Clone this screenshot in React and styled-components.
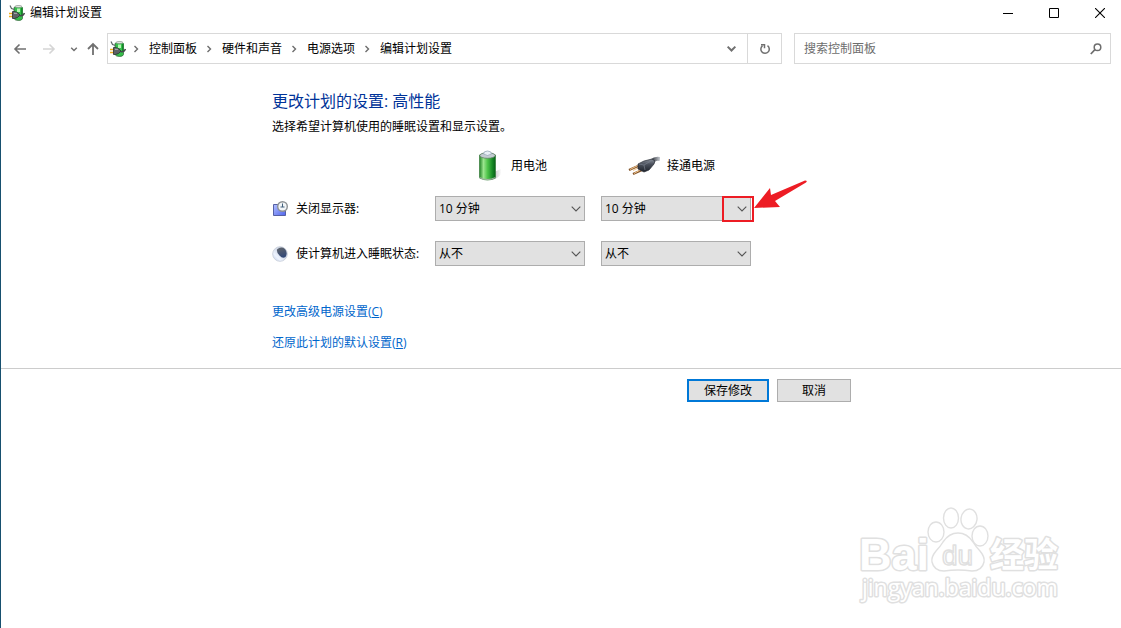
import React, { memo } from 'react'
import styled, { createGlobalStyle } from 'styled-components'

const GlobalStyle = createGlobalStyle`
  * {
    box-sizing: border-box;
  }

  body {
    margin: 0;
    background: #fff;
  }

  body, button, input, select {
    font-family: "Open Sans", "Noto Sans CJK SC", sans-serif;
    font-size: 12px;
    line-height: 16px;
    color: #000;
  }

  button {
    padding: 0;
    border: none;
    background: transparent;
  }

  svg {
    display: block;
    flex-shrink: 0;
  }
`

const WindowWrapper = styled.div`
  position: relative;
  min-height: 100vh;
  border-left: 1px solid #17506f;
`

const TitleBar = styled.header`
  display: flex;
  align-items: center;
  justify-content: space-between;
  height: 25px;
  padding-left: 8px;

  .window-title {
    display: flex;
    align-items: center;
    gap: 5px;
  }

  .window-controls {
    display: flex;
    gap: 4px;
  }
`

const ControlButton = styled.button`
  display: flex;
  align-items: center;
  justify-content: center;
  width: 42px;
  height: 24px;
`

const NavBar = styled.nav`
  display: flex;
  align-items: center;
  padding: 8px 10px 0 10px;
`

const NavButton = styled.button`
  display: flex;
  align-items: center;
  justify-content: center;
  width: ${props => props.$width}px;
  height: 30px;
  color: ${props => (props.disabled ? '#d5d5d5' : '#707070')};
`

const AddressBar = styled.div`
  display: flex;
  flex: 1;
  align-items: center;
  height: 31px;
  padding-left: 2px;
  border: 1px solid #d9d9d9;

  .crumbs {
    display: flex;
    flex: 1;
    align-items: center;
    margin: 0;
    padding: 0;
    list-style: none;
  }

  .crumbs li {
    display: flex;
    align-items: center;
    white-space: nowrap;
  }

  .crumbs li + li {
    padding-left: 2px;
  }

  .crumbs svg {
    margin: 0 9px 0 6px;
  }

  .crumbs a {
    color: #000;
    text-decoration: none;
  }

  .refresh {
    height: 29px;
    border-left: 1px solid #d9d9d9;
  }
`

const SearchBox = styled.label`
  display: flex;
  align-items: center;
  width: 317px;
  height: 31px;
  margin-left: 12px;
  padding: 0 8px 0 9px;
  border: 1px solid #d9d9d9;

  input {
    flex: 1;
    min-width: 0;
    padding: 0;
    border: none;
    outline: none;
  }

  input::placeholder {
    color: #6d6d6d;
    opacity: 1;
  }
`

const Content = styled.main`
  max-width: 578px;
  margin: 0 auto;
  padding-top: 25px;

  h1 {
    margin: 0;
    font-size: 16px;
    font-weight: normal;
    line-height: 24px;
    color: #003399;
  }

  p {
    margin: 6px 0 0;
  }
`

const PlanGrid = styled.div`
  display: grid;
  grid-template-columns: 147px 150px 150px;
  column-gap: 16px;
  align-items: center;
  margin-top: 15px;
`

const SourceHeader = styled.div`
  display: flex;
  align-items: center;
  gap: 7px;
  height: 32px;
  margin-bottom: 4px;
  padding-left: ${props => props.$indent}px;
`

const SettingLabel = styled.label`
  display: flex;
  align-items: center;
  gap: 8px;
  height: 45px;
  white-space: nowrap;
`

const SelectWrapper = styled.div`
  position: relative;

  select {
    display: block;
    width: 100%;
    height: 25px;
    padding: 0 24px 0 3px;
    border: 1px solid #adadad;
    border-radius: 0;
    background: #e1e1e1;
    appearance: none;
  }

  .select-arrow {
    position: absolute;
    top: 9px;
    right: 4px;
    pointer-events: none;
  }
`

const HighlightBox = styled.div`
  position: absolute;
  top: 0;
  right: -3px;
  width: 32px;
  height: 26px;
  border: 2px solid #ed1c24;
  pointer-events: none;
`

const PointerArrow = styled.svg`
  position: absolute;
  left: 153px;
  bottom: 7px;
  pointer-events: none;
`

const LinkList = styled.div`
  display: flex;
  flex-direction: column;
  align-items: flex-start;
  gap: 15px;
  margin-top: 28px;
  padding-bottom: 17px;

  a {
    color: #0066cc;
    text-decoration: none;
  }
`

const Footer = styled.footer`
  padding-top: 10px;
  border-top: 1px solid #ccc;

  .footer-actions {
    display: flex;
    justify-content: flex-end;
    gap: 8px;
    max-width: 580px;
    margin: 0 auto;
  }
`

const ActionButton = styled.button`
  width: ${props => (props.$primary ? 82 : 74)}px;
  height: 23px;
  border: ${props => (props.$primary ? '2px solid #0078d7' : '1px solid #adadad')};
  background: #e1e1e1;
`

const Watermark = styled.svg`
  position: absolute;
  right: 56px;
  bottom: 18px;
  pointer-events: none;
`

const PowerIcon = () => (
  <svg width="16" height="16" viewBox="0 0 16 16">
    <path d="M5 2.500Q6 1 9.500 1T13.500 2.500V13.500Q13 15.500 9.500 15.500T5 13.500z" fill="#35c04a" stroke="#2f5f36" strokeWidth=".7" />
    <path d="M12 3h1.500v8h-1.500z" fill="#148a2a" />
    <path d="M8 3.500h3v3.500h-3z" fill="#b6f5b2" />
    <ellipse cx="9.500" cy="1.600" rx="3.500" ry="1" fill="#e8f0e8" stroke="#777" strokeWidth=".5" />
    <path d="M1 .500l1.500 3L5.500 4.500" fill="none" stroke="#5a6366" strokeWidth="1.200" />
    <path d="M0 8.500h4M0 11.500h4" stroke="#f0b020" strokeWidth="1.500" />
    <path d="M3.500 6.500h2l3 1 2.500 2.500-2.500 2.500-3 1h-2z" fill="#5e6265" stroke="#2b2f31" strokeWidth=".8" />
    <path d="M5 8.300h3" stroke="#b4b9bb" />
    <path d="M10.500 10.500q4 1 5-2.500" fill="none" stroke="#44484b" strokeWidth="1.500" />
  </svg>
)

const BatteryIcon = () => (
  <svg width="32" height="32" viewBox="0 0 32 32">
    <defs>
      <linearGradient id="cell">
        <stop offset="0" stopColor="#218326" />
        <stop offset=".25" stopColor="#9be58e" />
        <stop offset=".5" stopColor="#4fc44b" />
        <stop offset=".8" stopColor="#188a26" />
        <stop offset="1" stopColor="#075f18" />
      </linearGradient>
      <linearGradient id="cellShadow">
        <stop offset="0" stopColor="#aaa" />
        <stop offset="1" stopColor="#fff" />
      </linearGradient>
    </defs>
    <path d="M22 22l7-3q2 6-6 10l-4 1z" fill="url(#cellShadow)" />
    <path d="M7.500 5q8-4 16 0v23q-8 4-16 0z" fill="url(#cell)" stroke="#367b3b" strokeWidth=".7" />
    <ellipse cx="15.500" cy="5.500" rx="7.700" ry="2.800" fill="#c3cbd1" stroke="#65806b" strokeWidth=".8" />
    <path d="M11.500 4q0-3 4-3t4 3q-4 3-8 0" fill="#e8eef5" stroke="#8c9daf" strokeWidth=".7" />
    <path d="M7.500 27q8 4 16 0v1q-8 4-16 0z" fill="#a4b5a5" />
  </svg>
)

const PlugIcon = () => (
  <svg width="32" height="32" viewBox="0 0 32 32">
    <defs>
      <linearGradient id="plugBody" x2="0" y2="1">
        <stop offset="0" stopColor="#8c929e" />
        <stop offset=".4" stopColor="#4b515c" />
        <stop offset="1" stopColor="#1d222b" />
      </linearGradient>
      <linearGradient id="cord">
        <stop offset="0" stopColor="#343840" />
        <stop offset="1" stopColor="#c8ccd2" />
      </linearGradient>
    </defs>
    <path d="M24 11q3-3 8-2" fill="none" stroke="url(#cord)" strokeWidth="4" />
    <path d="M10 16L1 20M14 20l-9 4" stroke="#85572c" strokeWidth="2.400" />
    <path d="M10 15.500L2 19.500M13 19.500l-7 4M10 18l-5 2.500" stroke="#f3c58c" strokeWidth="1" />
    <path d="M10 14l6-3 8-2 3 2-1 3-5 6-5 2-6-3z" fill="url(#plugBody)" stroke="#252a32" strokeWidth=".7" />
    <path d="M11 14l5 1 7-4M16 15l1 5" fill="none" stroke="#777e8b" strokeWidth=".7" />
  </svg>
)

const DisplayIcon = () => (
  <svg width="16" height="16" viewBox="0 0 16 16">
    <defs>
      <linearGradient id="screen" x2="1" y2="1">
        <stop offset="0" stopColor="#b4c2ff" />
        <stop offset="1" stopColor="#4f63ec" />
      </linearGradient>
    </defs>
    <path d="M1.500 3.500h12v11h-12z" fill="url(#screen)" stroke="#5560a4" />
    <circle cx="10.500" cy="5.500" r="4.800" fill="#f2f5f7" stroke="#8d9194" strokeWidth="1.400" />
    <path d="M10.500 2.500v3.500M8.500 6h4" fill="none" stroke="#42617c" />
  </svg>
)

const SleepIcon = () => (
  <svg width="16" height="16" viewBox="0 0 16 16">
    <defs>
      <linearGradient id="moon" x1="0" y1="1" x2="1" y2="0">
        <stop offset="0" stopColor="#b9c9e4" />
        <stop offset=".3" stopColor="#eef4ff" />
        <stop offset="1" stopColor="#a5b0c4" />
      </linearGradient>
      <linearGradient id="night" x2=".3" y2="1">
        <stop offset="0" stopColor="#63676b" />
        <stop offset="1" stopColor="#344a78" />
      </linearGradient>
    </defs>
    <circle cx="8" cy="8" r="7.300" fill="url(#moon)" stroke="#cdd3de" />
    <path d="M5 3.500q4-3.500 8-.5 3 4 .5 8-3 2-6-1.500Q4.500 7 5 3.500" fill="url(#night)" />
  </svg>
)

const CrumbArrow = () => (
  <svg width="8" height="8" viewBox="0 0 8 8">
    <path d="M2.500 1l3 3-3 3" fill="none" stroke="#6d6d6d" strokeWidth="1.400" />
  </svg>
)

const DownArrow = ({ size }) => (
  <svg width={size} height={size} viewBox="0 0 10 10">
    <path d="M1.500 3.300L5 6.800l3.500-3.500" fill="none" stroke="#707070" strokeWidth="1.800" />
  </svg>
)

const crumbs = ['控制面板', '硬件和声音', '电源选项', '编辑计划设置']

const settings = [
  { id: 'display', label: '关闭显示器:', icon: <DisplayIcon />, value: '10 分钟', marked: true },
  { id: 'sleep', label: '使计算机进入睡眠状态:', icon: <SleepIcon />, value: '从不' }
]

const options = ['10 分钟', '从不']

const TimeSelect = memo(function TimeSelect(props) {
  const { id, labelledBy, value, marked } = props
  return (
    <SelectWrapper>
      <select id={id} aria-labelledby={labelledBy} defaultValue={value}>
        {options.map(item => <option key={item}>{item}</option>)}
      </select>
      <svg className="select-arrow" width="10" height="8" viewBox="0 0 10 8">
        <path d="M.7 1.700L5 6l4.300-4.300" fill="none" stroke="#555" strokeWidth="1.100" />
      </svg>
      {marked && (
        <>
          <HighlightBox />
          <PointerArrow width="54" height="34" viewBox="0 0 54 34">
            <path d="M0 28L16 8l1 7L51 .500q3 0 1 2L21 21l5 6z" fill="#ed1c24" />
          </PointerArrow>
        </>
      )}
    </SelectWrapper>
  )
})

const BaiduMark = () => (
  <Watermark width="210" height="108" viewBox="0 0 210 108" fill="#fff" stroke="#e0e0e0" strokeWidth="1.400" strokeLinejoin="round" aria-hidden="true">
    <text x="4" y="68" fontSize="45" fontFamily="Liberation Sans, sans-serif" fontWeight="bold" strokeWidth="3" paintOrder="stroke">Bai</text>
    <ellipse cx="81" cy="30" rx="8" ry="10" />
    <ellipse cx="96" cy="16" rx="7.500" ry="10" />
    <ellipse cx="114" cy="17" rx="8" ry="10" transform="rotate(8 114 17)" />
    <ellipse cx="125" cy="34" rx="8" ry="10" />
    <path d="M103 31q9 0 15 9 3 5 7 9 5 6 4 11-2 9-12 9-7-1-14-1t-14 1q-10 0-12-9-1-5 4-11 4-4 7-9 6-9 15-9z" />
    <text x="87" y="63" fontSize="28" fontFamily="Liberation Sans, sans-serif" strokeWidth="1.500">du</text>
    <text x="135" y="65" fontSize="34" fontFamily="Noto Sans CJK SC, sans-serif" fontWeight="bold" strokeWidth="3" paintOrder="stroke">经验</text>
    <text x="7" y="94" fontSize="23" fontFamily="Open Sans, sans-serif" strokeWidth="3" paintOrder="stroke">jingyan.baidu.com</text>
  </Watermark>
)

export default memo(function App() {
  return (
    <WindowWrapper>
      <GlobalStyle />
      <TitleBar>
        <div className="window-title">
          <PowerIcon />
          <span>编辑计划设置</span>
        </div>
        <div className="window-controls">
          <ControlButton aria-label="最小化">
            <svg width="10" height="10"><path d="M0 5.500h10" stroke="#000" /></svg>
          </ControlButton>
          <ControlButton aria-label="最大化">
            <svg width="10" height="10"><path d="M.5.500h9v9h-9z" fill="none" stroke="#000" /></svg>
          </ControlButton>
          <ControlButton aria-label="关闭">
            <svg width="10" height="10"><path d="M0 0l10 10M10 0L0 10" stroke="#000" strokeWidth="1.100" /></svg>
          </ControlButton>
        </div>
      </TitleBar>
      <NavBar>
        <NavButton $width={18} aria-label="后退">
          <svg width="14" height="12" viewBox="0 0 14 12"><path d="M13 6H2M6.500 1.500L2 6l4.500 4.500" fill="none" stroke="currentColor" strokeWidth="1.600" /></svg>
        </NavButton>
        <NavButton $width={40} disabled aria-label="前进">
          <svg width="14" height="12" viewBox="0 0 14 12"><path d="M1 6h11M7.500 1.500L12 6l-4.500 4.500" fill="none" stroke="currentColor" strokeWidth="1.600" /></svg>
        </NavButton>
        <NavButton $width={10} aria-label="最近浏览的位置">
          <DownArrow size={8} />
        </NavButton>
        <NavButton $width={28} aria-label="向上">
          <svg width="12" height="14" viewBox="0 0 12 14"><path d="M6 13V2M1 7l5-5 5 5" fill="none" stroke="currentColor" strokeWidth="1.800" /></svg>
        </NavButton>
        <AddressBar>
          <PowerIcon />
          <ol className="crumbs">
            {crumbs.map(item => (
              <li key={item}>
                <CrumbArrow />
                <a href="#crumb">{item}</a>
              </li>
            ))}
          </ol>
          <NavButton $width={32} aria-label="以前的位置">
            <DownArrow size={11} />
          </NavButton>
          <NavButton $width={34} className="refresh" aria-label="刷新">
            <svg width="12" height="12" viewBox="0 0 12 12">
              <path d="M8.500 2.700A4.200 4.200 0 1 1 3.500 2.800M2 1.700h3.500v3.500" fill="none" stroke="currentColor" strokeWidth="1.500" />
            </svg>
          </NavButton>
        </AddressBar>
        <SearchBox>
          <input type="text" placeholder="搜索控制面板" aria-label="搜索控制面板" />
          <svg width="12" height="12" viewBox="0 0 12 12">
            <circle cx="7.500" cy="4.200" r="3.300" fill="none" stroke="#6d6d6d" strokeWidth="1.500" />
            <path d="M5 6.500L.8 11" stroke="#6d6d6d" strokeWidth="1.800" />
          </svg>
        </SearchBox>
      </NavBar>
      <Content>
        <h1>更改计划的设置: 高性能</h1>
        <p>选择希望计算机使用的睡眠设置和显示设置。</p>
        <PlanGrid>
          <span />
          <SourceHeader $indent={37}>
            <BatteryIcon />
            <span id="battery">用电池</span>
          </SourceHeader>
          <SourceHeader $indent={27}>
            <PlugIcon />
            <span id="plugged">接通电源</span>
          </SourceHeader>
          {settings.map(item => (
            <React.Fragment key={item.id}>
              <SettingLabel id={`${item.id}-label`} htmlFor={`${item.id}-battery`}>
                {item.icon}
                {item.label}
              </SettingLabel>
              <TimeSelect id={`${item.id}-battery`} labelledBy={`${item.id}-label battery`} value={item.value} />
              <TimeSelect id={`${item.id}-plugged`} labelledBy={`${item.id}-label plugged`} value={item.value} marked={item.marked} />
            </React.Fragment>
          ))}
        </PlanGrid>
        <LinkList>
          <a href="#advanced">更改高级电源设置(<u>C</u>)</a>
          <a href="#restore">还原此计划的默认设置(<u>R</u>)</a>
        </LinkList>
      </Content>
      <Footer>
        <div className="footer-actions">
          <ActionButton $primary>保存修改</ActionButton>
          <ActionButton>取消</ActionButton>
        </div>
      </Footer>
      <BaiduMark />
    </WindowWrapper>
  )
})
